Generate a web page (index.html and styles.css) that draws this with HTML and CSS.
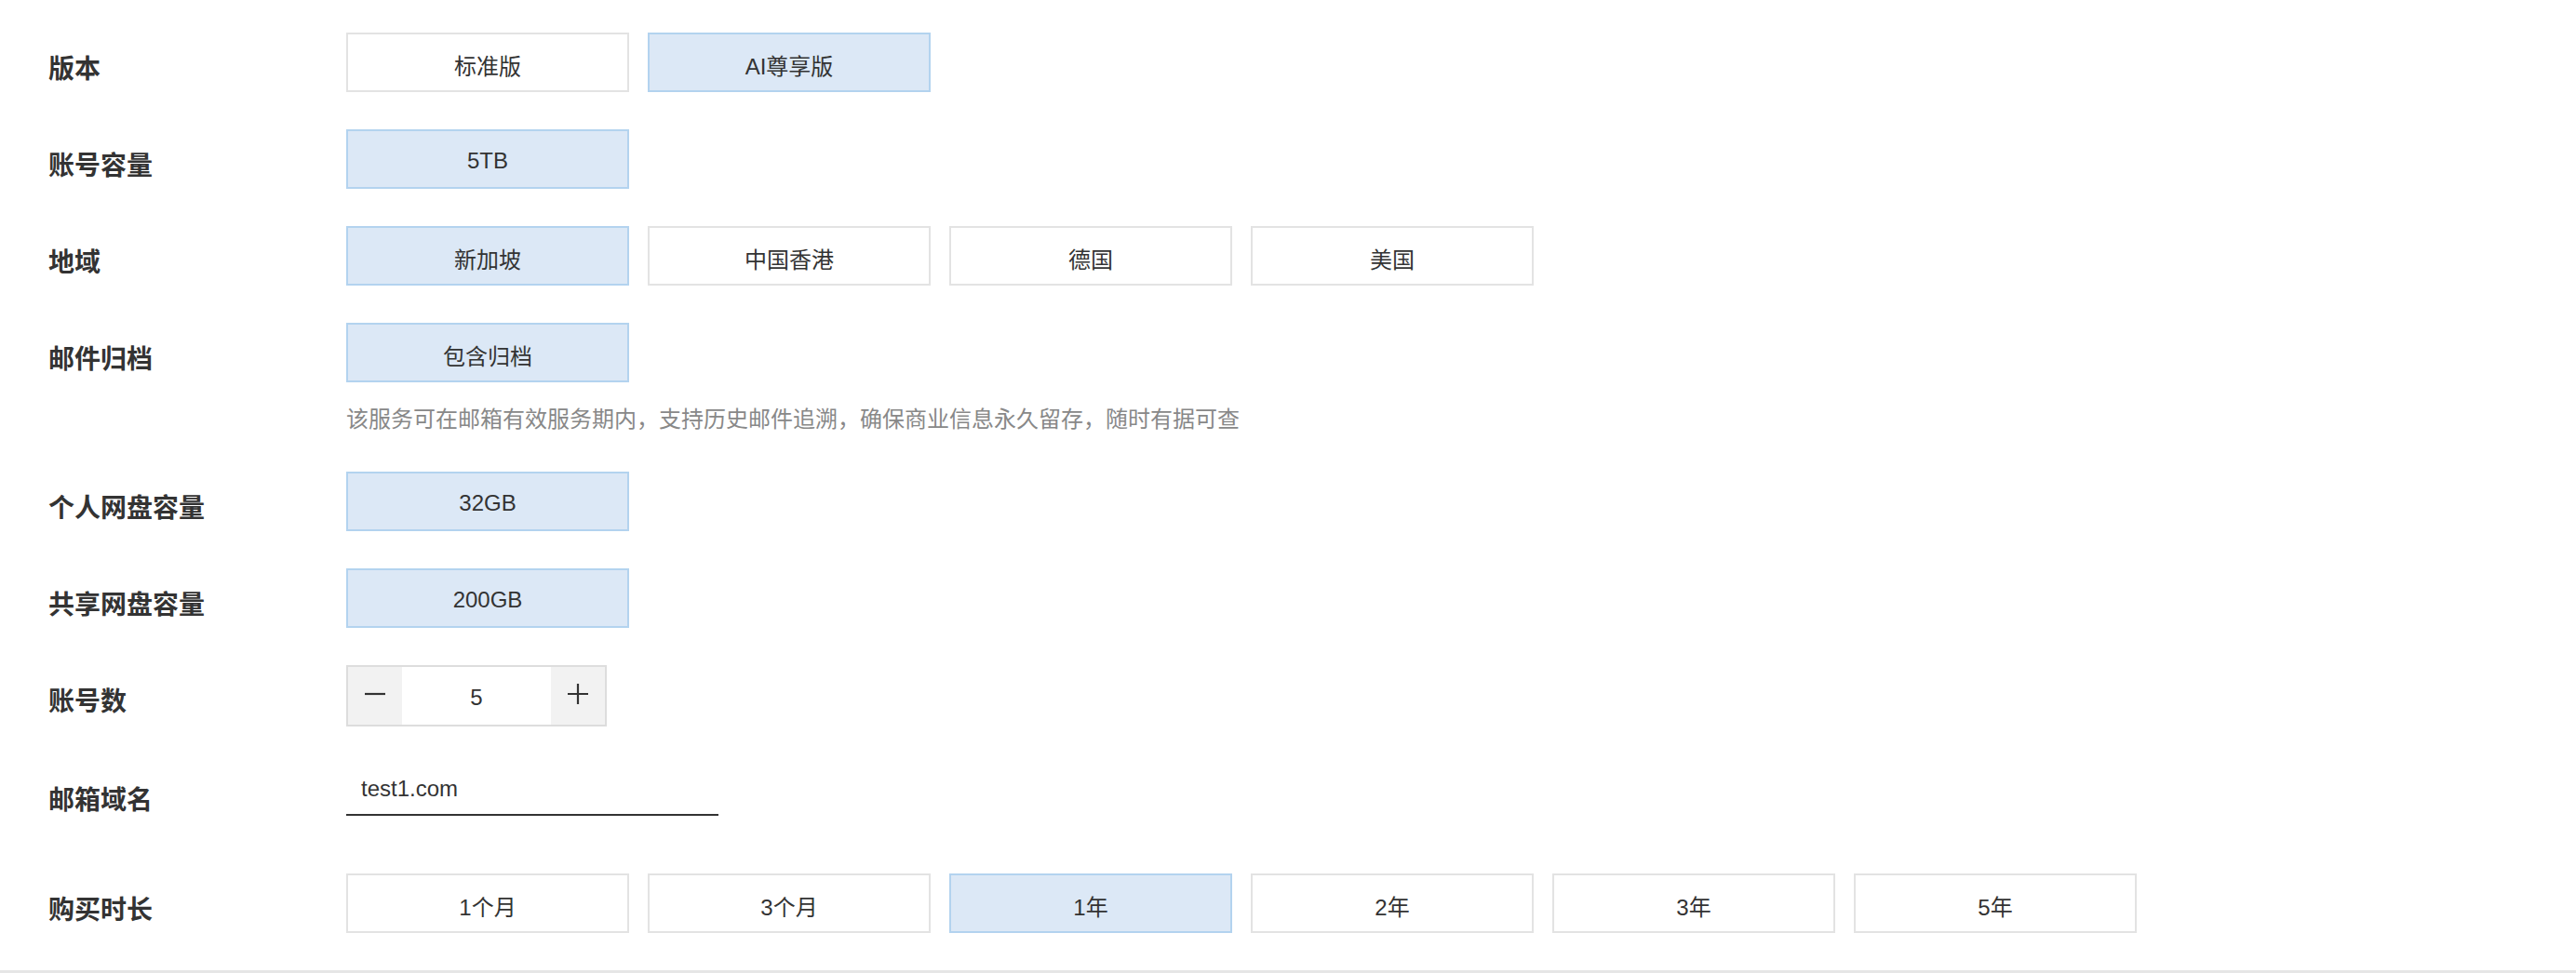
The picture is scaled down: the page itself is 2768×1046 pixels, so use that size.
FILE: index.html
```html
<!DOCTYPE html>
<html lang="zh-CN">
<head>
<meta charset="utf-8">
<title>购买配置</title>
<link rel="stylesheet" href="styles.css">
</head>
<body>
<div class="form">
  <div class="row">
    <div class="label">版本</div>
    <div class="field">
      <div class="options">
        <div class="opt">标准版</div>
        <div class="opt sel">AI尊享版</div>
      </div>
    </div>
  </div>
  <div class="row">
    <div class="label">账号容量</div>
    <div class="field">
      <div class="options">
        <div class="opt sel">5TB</div>
      </div>
    </div>
  </div>
  <div class="row">
    <div class="label">地域</div>
    <div class="field">
      <div class="options">
        <div class="opt sel">新加坡</div>
        <div class="opt">中国香港</div>
        <div class="opt">德国</div>
        <div class="opt">美国</div>
      </div>
    </div>
  </div>
  <div class="row">
    <div class="label">邮件归档</div>
    <div class="field">
      <div class="options">
        <div class="opt sel">包含归档</div>
      </div>
      <div class="hint">该服务可在邮箱有效服务期内，支持历史邮件追溯，确保商业信息永久留存，随时有据可查</div>
    </div>
  </div>
  <div class="row">
    <div class="label">个人网盘容量</div>
    <div class="field">
      <div class="options">
        <div class="opt sel">32GB</div>
      </div>
    </div>
  </div>
  <div class="row">
    <div class="label">共享网盘容量</div>
    <div class="field">
      <div class="options">
        <div class="opt sel">200GB</div>
      </div>
    </div>
  </div>
  <div class="row">
    <div class="label">账号数</div>
    <div class="field">
      <div class="stepper">
        <div class="step-btn">
          <svg width="24" height="24" viewBox="0 0 24 24"><path d="M1 12h22" stroke="#333" stroke-width="2.2" fill="none"/></svg>
        </div>
        <div class="step-val">5</div>
        <div class="step-btn">
          <svg width="24" height="24" viewBox="0 0 24 24"><path d="M1 12h22M12 1v22" stroke="#333" stroke-width="2.2" fill="none"/></svg>
        </div>
      </div>
    </div>
  </div>
  <div class="row row-domain">
    <div class="label">邮箱域名</div>
    <div class="field">
      <div class="domain">test1.com</div>
    </div>
  </div>
  <div class="row">
    <div class="label">购买时长</div>
    <div class="field">
      <div class="options">
        <div class="opt">1个月</div>
        <div class="opt">3个月</div>
        <div class="opt sel">1年</div>
        <div class="opt">2年</div>
        <div class="opt">3年</div>
        <div class="opt">5年</div>
      </div>
    </div>
  </div>
</div>
<div class="footer-line"></div>
</body>
</html>
```

FILE: styles.css
```css
html, body {
  margin: 0;
  padding: 0;
  background: #ffffff;
}

body {
  font-family: "Liberation Sans", "Noto Sans CJK SC", sans-serif;
  color: #333333;
}

.form {
  padding: 35px 0 0 52px;
}

.row {
  display: flex;
  align-items: flex-start;
  margin-bottom: 40px;
}

.row-domain {
  margin-bottom: 54px;
}

.label {
  flex: none;
  width: 320px;
  box-sizing: border-box;
  padding-top: 16px;
  line-height: 48px;
  font-size: 28px;
  font-weight: bold;
  color: #333333;
}

.field {
  flex: 1;
}

.options {
  display: flex;
  gap: 20px;
}

.opt {
  width: 304px;
  height: 64px;
  box-sizing: border-box;
  border: 2px solid #e3e3e3;
  padding-top: 4px;
  background: #ffffff;
  display: flex;
  align-items: center;
  justify-content: center;
  font-size: 24px;
  color: #333333;
}

.opt.sel {
  background: #dce8f6;
  border-color: #b3d3ef;
}

.hint {
  margin-top: 24px;
  line-height: 32px;
  font-size: 24px;
  color: #888888;
}

.stepper {
  display: flex;
  width: 280px;
  height: 66px;
  box-sizing: border-box;
  border: 2px solid #dddddd;
}

.step-btn {
  width: 58px;
  background: #f2f2f2;
  display: flex;
  align-items: center;
  justify-content: center;
  padding-bottom: 4px;
  box-sizing: border-box;
}

.step-val {
  flex: 1;
  display: flex;
  align-items: center;
  justify-content: center;
  padding-top: 4px;
  font-size: 24px;
  color: #333333;
}

.domain {
  width: 400px;
  height: 56px;
  box-sizing: border-box;
  border-bottom: 2px solid #333333;
  padding-left: 16px;
  line-height: 54px;
  font-size: 24px;
  color: #333333;
}

.footer-line {
  height: 3px;
  background: #e6e6e6;
}
```
